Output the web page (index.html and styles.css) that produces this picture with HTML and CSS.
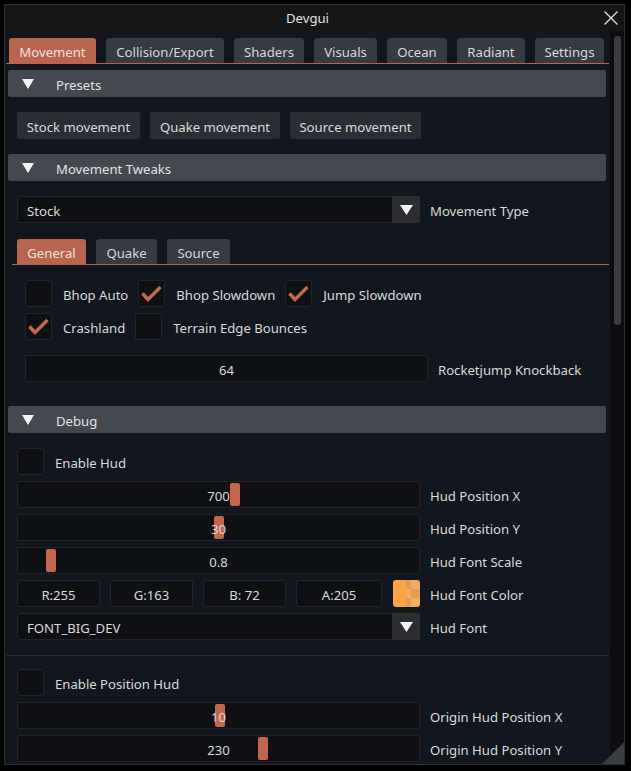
FILE: index.html
```html
<!DOCTYPE html>
<html>
<head>
<meta charset="utf-8">
<link rel="stylesheet" href="styles.css">
</head>
<body>
<div class="window">
  <div class="titlebar">
    <span class="title">Devgui</span>
    <svg class="close" width="14" height="14" viewBox="0 0 14 14"><path d="M0.5 0.5 L13.5 13.5 M13.5 0.5 L0.5 13.5" stroke="#e2e2e2" stroke-width="1.3" fill="none"/></svg>
  </div>
  <div class="body">
    <div class="content">
      <div class="tabbar main-tabs">
        <div class="tab active w-mov">Movement</div>
        <div class="tab w-col">Collision/Export</div>
        <div class="tab w-sha">Shaders</div>
        <div class="tab w-vis">Visuals</div>
        <div class="tab w-oce">Ocean</div>
        <div class="tab w-rad">Radiant</div>
        <div class="tab w-set">Settings</div>
      </div>

      <div class="header"><svg class="tri" width="12" height="10" viewBox="0 0 12 10"><polygon points="0,0 12,0 6,10" fill="#f2f2f2"/></svg><span class="htext">Presets</span></div>
      <div class="row btn-row">
        <div class="btn w-b1">Stock movement</div>
        <div class="btn w-b2">Quake movement</div>
        <div class="btn w-b3">Source movement</div>
      </div>

      <div class="header gap-15"><svg class="tri" width="12" height="10" viewBox="0 0 12 10"><polygon points="0,0 12,0 6,10" fill="#f2f2f2"/></svg><span class="htext">Movement Tweaks</span></div>
      <div class="row ind12 gap-15">
        <div class="combo"><span class="ctext">Stock</span><span class="carrow"><svg width="13" height="10" viewBox="0 0 13 10"><polygon points="0,0 13,0 6.5,10" fill="#f2f2f2"/></svg></span></div>
        <span class="lbl side">Movement Type</span>
      </div>

      <div class="tabbar sub-tabs">
        <div class="tab active w-gen">General</div>
        <div class="tab w-qua">Quake</div>
        <div class="tab w-src">Source</div>
      </div>

      <div class="row ind20 gap-15">
        <div class="check"></div><span class="lbl cl">Bhop Auto</span>
        <div class="check on nx"><svg width="27" height="27" viewBox="0 0 27 27"><polyline points="4.5,13.5 10,19.5 22.5,7" fill="none" stroke="#c4694e" stroke-width="3.4"/></svg></div><span class="lbl cl">Bhop Slowdown</span>
        <div class="check on nx"><svg width="27" height="27" viewBox="0 0 27 27"><polyline points="4.5,13.5 10,19.5 22.5,7" fill="none" stroke="#c4694e" stroke-width="3.4"/></svg></div><span class="lbl cl">Jump Slowdown</span>
      </div>
      <div class="row ind20 gap-6">
        <div class="check on"><svg width="27" height="27" viewBox="0 0 27 27"><polyline points="4.5,13.5 10,19.5 22.5,7" fill="none" stroke="#c4694e" stroke-width="3.4"/></svg></div><span class="lbl cl">Crashland</span>
        <div class="check nx"></div><span class="lbl cl">Terrain Edge Bounces</span>
      </div>
      <div class="row ind20 gap-15">
        <div class="frame center">64</div>
        <span class="lbl side">Rocketjump Knockback</span>
      </div>

      <div class="header gap-24"><svg class="tri" width="12" height="10" viewBox="0 0 12 10"><polygon points="0,0 12,0 6,10" fill="#f2f2f2"/></svg><span class="htext">Debug</span></div>
      <div class="row ind12 gap-15">
        <div class="check"></div><span class="lbl cl">Enable Hud</span>
      </div>
      <div class="row ind12 gap-6">
        <div class="frame slider"><span class="grab" style="left:213px"></span><span class="sval">700</span></div>
        <span class="lbl side">Hud Position X</span>
      </div>
      <div class="row ind12 gap-6">
        <div class="frame slider"><span class="grab" style="left:197px"></span><span class="sval">30</span></div>
        <span class="lbl side">Hud Position Y</span>
      </div>
      <div class="row ind12 gap-6">
        <div class="frame slider"><span class="grab" style="left:29px"></span><span class="sval">0.8</span></div>
        <span class="lbl side">Hud Font Scale</span>
      </div>
      <div class="row ind12 gap-6">
        <div class="colors">
          <div class="frame center cw">R:255</div>
          <div class="frame center cw">G:163</div>
          <div class="frame center cw">B: 72</div>
          <div class="frame center cwa">A:205</div>
        </div>
        <div class="swatch"></div>
        <span class="lbl side">Hud Font Color</span>
      </div>
      <div class="row ind12 gap-6">
        <div class="combo"><span class="ctext">FONT_BIG_DEV</span><span class="carrow"><svg width="13" height="10" viewBox="0 0 13 10"><polygon points="0,0 13,0 6.5,10" fill="#f2f2f2"/></svg></span></div>
        <span class="lbl side">Hud Font</span>
      </div>
      <div class="separator"></div>
      <div class="row ind12 gap-13">
        <div class="check"></div><span class="lbl cl">Enable Position Hud</span>
      </div>
      <div class="row ind12 gap-6">
        <div class="frame slider"><span class="grab" style="left:198px"></span><span class="sval">10</span></div>
        <span class="lbl side">Origin Hud Position X</span>
      </div>
      <div class="row ind12 gap-6">
        <div class="frame slider"><span class="grab" style="left:241px"></span><span class="sval">230</span></div>
        <span class="lbl side">Origin Hud Position Y</span>
      </div>
    </div>
    <div class="scrollbar"><div class="thumb"></div></div>
  </div>
  <div class="grip"></div>
</div>
</body>
</html>
```

FILE: styles.css
```css
* { box-sizing: border-box; }
html, body { margin: 0; padding: 0; background: #000; }
body {
  width: 631px;
  height: 771px;
  overflow: hidden;
  font-family: "Noto Sans", "Open Sans", sans-serif;
  font-size: 13.15px;
  color: #dadada;
}
.window {
  margin: 4px 0 0 4px;
  width: 621px;
  height: 761px;
  border: 1px solid #2d2d2f;
  background: #12161e;
  display: flex;
  flex-direction: column;
  position: relative;
  overflow: hidden;
}
.titlebar {
  flex: none;
  height: 26px;
  background: #161616;
  display: flex;
  align-items: center;
}
.title {
  width: 605px;
  text-align: center;
  line-height: 26px;
  color: #e0e0e0;
}
.close { margin-left: -6px; flex: none; }
.body { flex: 1; display: flex; min-height: 0; }
.content {
  width: 605px;
  flex: none;
  padding-top: 7px;
  overflow: hidden;
}
.scrollbar {
  width: 14px;
  flex: none;
  background: #0e0e10;
  padding: 5px 3px 0 4px;
}
.thumb {
  height: 289px;
  background: #3c3c3e;
  border-radius: 3px;
}

/* tabs */
.tabbar {
  display: flex;
  gap: 10px;
  border-bottom: 1px solid #b9654d;
  height: 26px;
}
.main-tabs { margin-left: 1px; width: 603px; padding-left: 3px; }
.sub-tabs { margin: 16px 0 0 7px; width: 597px; padding-left: 5px; }
.tab {
  height: 25px;
  background: #363a43;
  border-radius: 3px 3px 0 0;
  text-align: center;
  line-height: 22px;
  padding-top: 3px;
  color: #d8d8d8;
  white-space: nowrap;
}
.tab.active { background: #b8654f; color: #f3e2dc; }
.w-mov { width: 87px; }
.w-col { width: 118px; }
.w-sha { width: 70px; }
.w-vis { width: 63px; }
.w-oce { width: 60px; }
.w-rad { width: 68px; }
.w-set { width: 69px; }
.w-gen { width: 69px; }
.w-qua { width: 61px; }
.w-src { width: 63px; }

/* headers */
.header {
  margin: 6px 0 0 3px;
  width: 598px;
  height: 27px;
  background: #43484f;
  border-radius: 2px;
  display: flex;
  align-items: center;
  padding-left: 14px;
}
.tri { flex: none; margin-top: 1px; }
.htext { margin-left: 22px; line-height: 24px; padding-top: 3px; color: #e2e2e2; }

/* rows */
.row { display: flex; align-items: center; }
.ind12 { padding-left: 12px; }
.ind20 { padding-left: 20px; }
.gap-6 { margin-top: 6px; }
.gap-13 { margin-top: 13px; }
.gap-15 { margin-top: 15px; }
.gap-24 { margin-top: 24px; }
.btn-row { margin-top: 15px; padding-left: 12px; gap: 10px; }
.btn {
  height: 27px;
  background: #2a2d33;
  border-radius: 2px;
  text-align: center;
  line-height: 24px;
  padding-top: 3px;
  white-space: nowrap;
}
.w-b1 { width: 123px; }
.w-b2 { width: 130px; }
.w-b3 { width: 131px; }

.lbl { line-height: 24px; padding-top: 3px; height: 27px; white-space: nowrap; }
.side { margin-left: 10px; }
.cl { margin-left: 11px; }
.nx { margin-left: 10px; }

.frame {
  width: 403px;
  height: 27px;
  background: #0f1013;
  border: 1px solid #222429;
  border-radius: 2px;
  line-height: 22px;
  padding-top: 3px;
  white-space: nowrap;
}
.center { text-align: center; }
.combo {
  width: 403px;
  height: 27px;
  background: #0f1013;
  border: 1px solid #222429;
  border-radius: 2px;
  display: flex;
}
.ctext { flex: 1; padding-left: 9px; line-height: 22px; padding-top: 3px; }
.carrow {
  width: 28px;
  margin: -1px -1px -1px 0;
  background: #2b2d32;
  border-radius: 0 2px 2px 0;
  display: flex;
  align-items: center;
  justify-content: center;
}
.carrow svg { margin-top: 1px; }

.check {
  width: 27px;
  height: 27px;
  flex: none;
  background: #0f1013;
  border: 1px solid #222429;
  border-radius: 2px;
}
.check svg { display: block; margin: -1px; }

.slider { position: relative; text-align: center; }
.grab {
  position: absolute;
  top: 1px;
  width: 10px;
  height: 23px;
  background: #c2674e;
  border-radius: 2px;
  margin-left: -1px;
}
.sval { position: relative; }

.colors { display: flex; gap: 10px; }
.cw { width: 83px; }
.cwa { width: 86px; }
.swatch {
  margin-left: 11px;
  width: 27px;
  height: 27px;
  flex: none;
  border-radius: 3px;
  background-image:
    linear-gradient(90deg, #ffa348 13.5px, transparent 13.5px),
    repeating-conic-gradient(#e69c53 0 25%, #f5ab62 0 50%);
  background-size: 27px 27px, 18px 18px;
}

.separator {
  margin: 15px 0 0 1px;
  width: 603px;
  height: 1px;
  background: #282c34;
}

.grip {
  position: absolute;
  right: 0;
  bottom: 0;
  width: 22px;
  height: 22px;
  background: #3a3d43;
  clip-path: polygon(100% 0, 100% 100%, 0 100%);
}
```
